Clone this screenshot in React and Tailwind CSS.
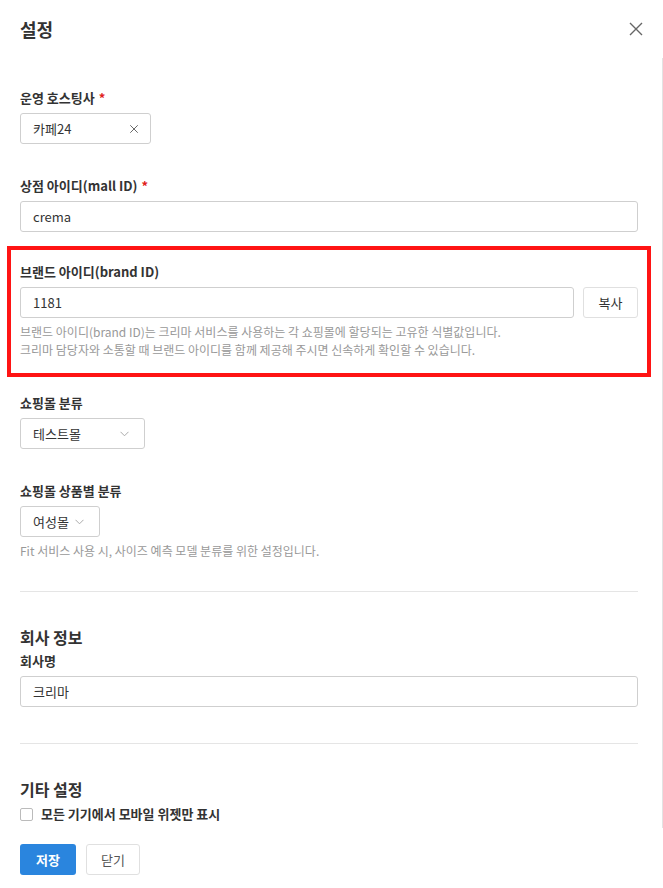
import React, { useState } from 'react';

const font = { fontFamily: '"Noto Sans CJK KR", "Noto Sans", sans-serif' };

const CloseIcon = ({ size = 16, className = '' }) => (
    <svg width={size} height={size} viewBox="0 0 16 16" className={className} fill="none" stroke="currentColor" strokeWidth="1.4">
        <path d="M2 2L14 14M14 2L2 14" />
    </svg>
);

const Chevron = () => (
    <svg width="9" height="6" viewBox="0 0 9 6" fill="none" stroke="#aaa" strokeWidth="1">
        <path d="M0.5 0.8L4.5 4.8L8.5 0.8" />
    </svg>
);

const Label = ({ children, required }) => (
    <div className="text-[13px] font-bold leading-[18px] text-[#333] mb-[6px]">
        {children}
        {required && <span className="text-[#e02020] ml-1">*</span>}
    </div>
);

const TextInput = ({ value, onChange }) => (
    <input
        value={value}
        onChange={onChange}
        className="w-full h-[31px] border border-[#cfcfcf] rounded-[3px] px-3 text-[13px] text-[#333] outline-none"
        style={font}
    />
);

const Select = ({ value, width }) => (
    <div className={`${width} h-[31px] border border-[#cfcfcf] rounded-[3px] pl-3 pr-[15px] flex items-center justify-between text-[13px] text-[#333]`}>
        <span>{value}</span>
        <Chevron />
    </div>
);

const Helper = ({ children }) => (
    <p className="text-[12px] leading-[18px] text-[#999]">{children}</p>
);

export default function App() {
    const [form, setForm] = useState({
        mallId: 'crema',
        brandId: '1181',
        company: '크리마',
    });
    const [mobileOnly, setMobileOnly] = useState(false);

    const onChange = (key) => (e) => {
        setForm((prev) => ({ ...prev, [key]: e.target.value }));
    };

    return (
        <div className="w-[663px] h-[888px] bg-white overflow-hidden" style={font}>
            {/* header */}
            <div className="h-[58px] flex items-center justify-between pl-5 pr-[19px]">
                <h1 className="text-[18px] font-bold text-[#333]">설정</h1>
                <button className="text-[#666]">
                    <CloseIcon size={16} />
                </button>
            </div>

            {/* body */}
            <div className="h-[770px] border-r border-[#e3e3e3] pl-5 pr-[24px] pt-[31px]">
                <Label required>운영 호스팅사</Label>
                <div className="w-[131px] h-[31px] border border-[#cfcfcf] rounded-[3px] pl-3 pr-[11px] flex items-center justify-between text-[13px] text-[#333]">
                    <span>카페24</span>
                    <CloseIcon size={10} className="text-[#555]" />
                </div>

                <div className="mt-[33px]">
                    <Label required>상점 아이디(mall ID)</Label>
                    <TextInput value={form.mallId} onChange={onChange('mallId')} />
                </div>

                <div className="mt-[14px] -mx-[13px] border-4 border-[#ff1414] px-[9px] pt-[13px] pb-[14px]">
                    <Label>브랜드 아이디(brand ID)</Label>
                    <div className="flex gap-[9px]">
                        <div className="flex-1">
                            <TextInput value={form.brandId} onChange={onChange('brandId')} />
                        </div>
                        <button className="w-[55px] h-[31px] border border-[#e0e0e0] rounded-[3px] text-[13px] text-[#333]">복사</button>
                    </div>
                    <div className="mt-[5px]">
                        <Helper>브랜드 아이디(brand ID)는 크리마 서비스를 사용하는 각 쇼핑몰에 할당되는 고유한 식별값입니다.</Helper>
                        <Helper>크리마 담당자와 소통할 때 브랜드 아이디를 함께 제공해 주시면 신속하게 확인할 수 있습니다.</Helper>
                    </div>
                </div>

                <div className="mt-[17px]">
                    <Label>쇼핑몰 분류</Label>
                    <Select value="테스트몰" width="w-[125px]" />
                </div>

                <div className="mt-[33px]">
                    <Label>쇼핑몰 상품별 분류</Label>
                    <Select value="여성몰" width="w-[80px]" />
                    <div className="mt-[5px]">
                        <Helper>Fit 서비스 사용 시, 사이즈 예측 모델 분류를 위한 설정입니다.</Helper>
                    </div>
                </div>

                <hr className="mt-[31px] border-t border-[#e5e5e5]" />

                <h2 className="mt-[33px] text-[16px] font-bold leading-[24px] text-[#333] mb-[3px]">회사 정보</h2>
                <Label>회사명</Label>
                <TextInput value={form.company} onChange={onChange('company')} />

                <hr className="mt-[36px] border-t border-[#e5e5e5]" />

                <h2 className="mt-[33px] text-[16px] font-bold leading-[24px] text-[#333]">기타 설정</h2>
                <label className="mt-[4px] flex items-center gap-2 cursor-pointer">
                    <input
                        type="checkbox"
                        checked={mobileOnly}
                        onChange={() => setMobileOnly((v) => !v)}
                        className="appearance-none w-[13px] h-[13px] border border-[#bbb] rounded-[2px] checked:bg-[#2a85de]"
                    />
                    <span className="text-[13px] font-bold leading-[18px] text-[#333]">모든 기기에서 모바일 위젯만 표시</span>
                </label>
            </div>

            {/* footer */}
            <div className="pt-4 pl-5 flex gap-[10px]">
                <button className="w-[56px] h-[31px] rounded-[3px] bg-[#2a85de] text-white text-[13px] font-bold">저장</button>
                <button className="w-[54px] h-[31px] rounded-[3px] border border-[#e0e0e0] text-[13px] text-[#555]">닫기</button>
            </div>
        </div>
    );
}
